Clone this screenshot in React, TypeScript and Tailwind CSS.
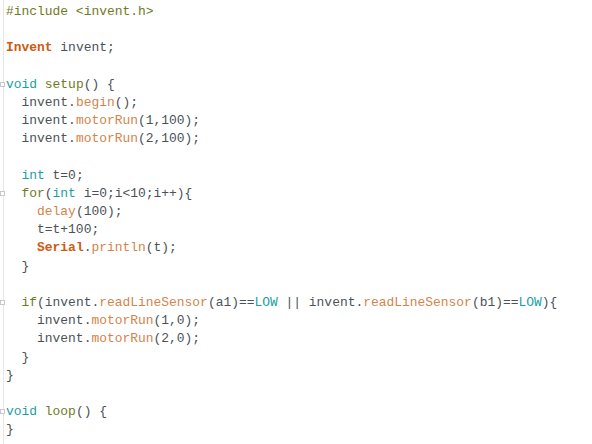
import React from 'react'

type Tok = [string, string?]

const K = 'text-[#1a9ea3]'
const F = 'text-[#d5834a]'
const B = 'text-[#cf5a12] font-bold'
const G = 'text-[#6f7a1e]'

const lines: { toks: Tok[]; fold?: boolean }[] = [
    { toks: [['#include <invent.h>', G]] },
    { toks: [] },
    { toks: [['Invent', B], [' invent;']] },
    { toks: [] },
    { toks: [['void', K], [' '], ['setup', G], ['() {']], fold: true },
    { toks: [['  invent.'], ['begin', F], ['();']] },
    { toks: [['  invent.'], ['motorRun', F], ['(1,100);']] },
    { toks: [['  invent.'], ['motorRun', F], ['(2,100);']] },
    { toks: [] },
    { toks: [['  '], ['int', K], [' t=0;']] },
    { toks: [['  '], ['for', G], ['('], ['int', K], [' i=0;i<10;i++){']], fold: true },
    { toks: [['    '], ['delay', F], ['(100);']] },
    { toks: [['    t=t+100;']] },
    { toks: [['    '], ['Serial', B], ['.'], ['println', F], ['(t);']] },
    { toks: [['  }']] },
    { toks: [] },
    {
        toks: [['  '], ['if', G], ['(invent.'], ['readLineSensor', F], ['(a1)=='], ['LOW', K], [' || invent.'], ['readLineSensor', F], ['(b1)=='], ['LOW', K], ['){']],
        fold: true,
    },
    { toks: [['    invent.'], ['motorRun', F], ['(1,0);']] },
    { toks: [['    invent.'], ['motorRun', F], ['(2,0);']] },
    { toks: [['  }']] },
    { toks: [['}']] },
    { toks: [] },
    { toks: [['void', K], [' '], ['loop', G], ['() {']], fold: true },
    { toks: [['}']] },
]

const App = () => {
    return (
        <div className="relative h-[444px] w-[592px] overflow-hidden bg-white">
            <div className="absolute left-[3px] top-0 h-full w-px bg-[#e6e6e6]" />
            <div className="pt-[3px] pl-[6px] font-['Liberation_Mono',monospace] text-[12.95px] leading-[18.2px] text-[#4a5257]">
                {lines.map((ln, i) => (
                    <div key={i} className="relative h-[18.2px] whitespace-pre">
                        {ln.fold && (
                            <span className="absolute left-[-6px] top-[6px] h-[5px] w-[5px] border border-[#c8c8c8] bg-white" />
                        )}
                        {ln.toks.map((t, j) => (
                            <span key={j} className={t[1]}>
                                {t[0]}
                            </span>
                        ))}
                    </div>
                ))}
            </div>
        </div>
    )
}

export default App
